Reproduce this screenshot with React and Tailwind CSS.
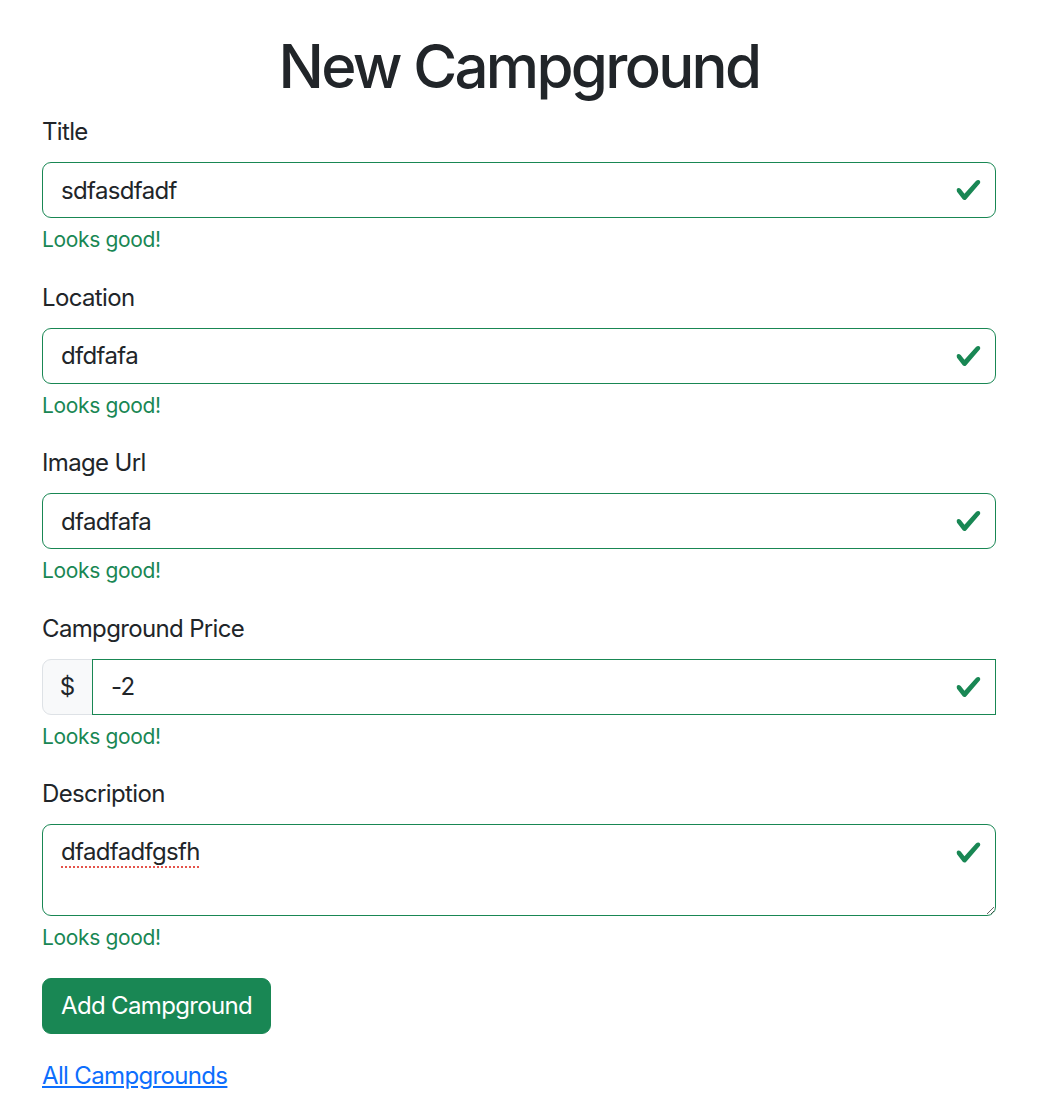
import React from "react";

const Check = ({ className }) => (
  <svg viewBox="0 0 8 8" className={className} aria-hidden="true">
    <path
      fill="#198754"
      d="M2.3 6.73.6 4.53c-.4-1.04.46-1.4 1.1-.8l1.1 1.4 3.4-3.8c.6-.63 1.6-.27 1.2.7l-4 4.6c-.43.5-.8.4-1.1.1z"
    />
  </svg>
);

const Feedback = () => (
  <div className="mt-[6px] text-[21px] leading-[31.5px] tracking-[-0.36px] text-[#198754]">Looks good!</div>
);

const Field = ({ label, value }) => (
  <div className="mb-[24px]">
    <label className="mb-[12px] block text-[24px] leading-[36px] tracking-[-0.65px] text-[#212529]">{label}</label>
    <div className="relative">
      <input
        readOnly
        value={value}
        className="block h-[56px] w-full rounded-[9px] border border-[#198754] bg-white py-[9px] pl-[18px] pr-[54px] text-[24px] leading-[36px] tracking-[-0.65px] text-[#212529] outline-none"
      />
      <Check className="pointer-events-none absolute right-[14.5px] top-1/2 h-[27px] w-[27px] -translate-y-1/2" />
    </div>
    <Feedback />
  </div>
);

export default function App() {
  return (
    <div
      className="min-h-[1118px] bg-white pl-[42px] pt-[30px] text-[#212529]"
      style={{ fontFamily: "Inter, 'Noto Sans', 'Liberation Sans', sans-serif" }}
    >
      <div className="w-[954px]">
        <h1 className="mb-[12px] text-center text-[60px] font-medium leading-[72px] tracking-[-2.7px]">
          New Campground
        </h1>
        <form>
          <Field label="Title" value="sdfasdfadf" />
          <Field label="Location" value="dfdfafa" />
          <Field label="Image Url" value="dfadfafa" />

          <div className="mb-[24px]">
            <label className="mb-[12px] block text-[24px] leading-[36px] tracking-[-0.65px]">Campground Price</label>
            <div className="flex">
              <span className="flex h-[56px] w-[51px] items-center justify-center rounded-l-[9px] border border-[#dee2e6] bg-[#f8f9fa] text-[24px] leading-[36px]">
                $
              </span>
              <div className="relative flex-1">
                <input
                  readOnly
                  value="-2"
                  className="-ml-px block h-[56px] w-[calc(100%+1px)] border border-[#198754] bg-white py-[9px] pl-[18px] pr-[54px] text-[24px] leading-[36px] tracking-[-0.65px] text-[#212529] outline-none"
                />
                <Check className="pointer-events-none absolute right-[14.5px] top-1/2 h-[27px] w-[27px] -translate-y-1/2" />
              </div>
            </div>
            <Feedback />
          </div>

          <div className="mb-[24px]">
            <label className="mb-[12px] block text-[24px] leading-[36px] tracking-[-0.65px]">Description</label>
            <div className="relative">
              <div className="h-[92px] w-full resize-y overflow-auto rounded-[9px] border border-[#198754] bg-white py-[9px] pl-[18px] pr-[54px] text-[24px] leading-[36px] tracking-[-0.65px]">
                <span className="underline decoration-[#e5534b] decoration-dotted decoration-2 underline-offset-[6px]">
                  dfadfadfgsfh
                </span>
              </div>
              <Check className="pointer-events-none absolute right-[14.5px] top-[14.5px] h-[27px] w-[27px]" />
            </div>
            <Feedback />
          </div>

          <button
            type="button"
            className="mb-[24px] block h-[56px] rounded-[9px] border border-[#198754] bg-[#198754] px-[18px] text-[24px] leading-[36px] tracking-[-0.65px] text-white"
          >
            Add Campground
          </button>
        </form>
        <a href="#" className="text-[24px] leading-[36px] tracking-[-0.65px] text-[#0d6efd] underline">
          All Campgrounds
        </a>
      </div>
    </div>
  );
}
